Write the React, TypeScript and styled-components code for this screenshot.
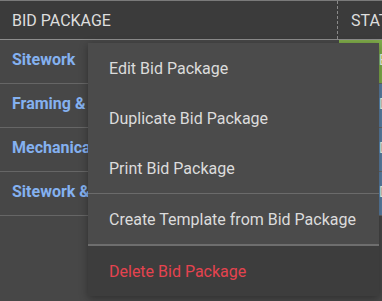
import React from "react";
import styled, { createGlobalStyle } from "styled-components";

const GlobalStyle = createGlobalStyle`
  html, body {
    margin: 0;
    padding: 0;
    background: #474747;
    font-family: Roboto, "Liberation Sans", sans-serif;
    overflow: hidden;
  }
`;

const rows = [
  { name: "Sitework", status: "Bidding", color: "#7fac4a" },
  { name: "Framing & Carpentry", status: "Draft", color: "#5a7ea3" },
  { name: "Mechanical", status: "Draft", color: "#5a7ea3" },
  { name: "Sitework & Grading", status: "Draft", color: "#5a7ea3" },
];

const menuItems = [
  "Edit Bid Package",
  "Duplicate Bid Package",
  "Print Bid Package",
];

const App = () => {
  return (
    <>
      <GlobalStyle />
      <Page>
        <Table>
          <HeaderRow>
            <NameHead>BID PACKAGE</NameHead>
            <StatusHead>STATUS</StatusHead>
          </HeaderRow>
          {rows.map((row) => (
            <Row key={row.name}>
              <NameCell>{row.name}</NameCell>
              <StatusCell $color={row.color}>{row.status}</StatusCell>
            </Row>
          ))}
        </Table>
        <Menu>
          {menuItems.map((item) => (
            <MenuItem key={item}>{item}</MenuItem>
          ))}
          <Divider />
          <MenuItem>Create Template from Bid Package</MenuItem>
          <ThickDivider />
          <DangerItem>Delete Bid Package</DangerItem>
        </Menu>
      </Page>
    </>
  );
};

export default App;

const Page = styled.div`
  position: relative;
  width: 382px;
  height: 301px;
  overflow: hidden;
`;

const Table = styled.div`
  border-top: 1px solid #7a7a7a;
  display: flex;
  flex-direction: column;
`;

const HeaderRow = styled.div`
  display: grid;
  grid-template-columns: 338px 120px;
  height: 38px;
  background: #3b3b3b;
  border-bottom: 1px solid #8c8c8c;
`;

const NameHead = styled.div`
  display: flex;
  align-items: center;
  padding-left: 12px;
  font-size: 16px;
  color: #dedede;
  border-right: 1px dashed #8a8a8a;
`;

const StatusHead = styled.div`
  display: flex;
  align-items: center;
  padding-left: 13px;
  font-size: 16px;
  color: #dedede;
  white-space: nowrap;
`;

const Row = styled.div`
  display: grid;
  grid-template-columns: 339px 120px;
  height: 43px;
  border-bottom: 1px solid #666666;
`;

const NameCell = styled.div`
  display: flex;
  align-items: center;
  padding-left: 12px;
  padding-bottom: 4px;
  font-size: 16px;
  font-weight: 700;
  color: #84b1f0;
  white-space: nowrap;
  overflow: hidden;
`;

const StatusCell = styled.div<{ $color: string }>`
  display: flex;
  align-items: center;
  padding-left: 40px;
  padding-bottom: 4px;
  font-size: 14px;
  color: #eef5e6;
  background: ${(p) => p.$color};
  white-space: nowrap;
`;

const Menu = styled.div`
  position: absolute;
  left: 88px;
  top: 43px;
  width: 291px;
  background: #4b4b4b;
  box-shadow: 0 2px 8px rgba(0, 0, 0, 0.35);
  display: flex;
  flex-direction: column;
`;

const MenuItem = styled.div`
  height: 50px;
  display: flex;
  align-items: center;
  padding-left: 21px;
  font-size: 16px;
  color: #dcdcdc;
  white-space: nowrap;
`;

const DangerItem = styled(MenuItem)`
  background: #3d3d3d;
  color: #e5434f;
`;

const Divider = styled.div`
  height: 1px;
  background: #6b6b6b;
`;

const ThickDivider = styled.div`
  height: 2px;
  background: #6e6e6e;
`;
